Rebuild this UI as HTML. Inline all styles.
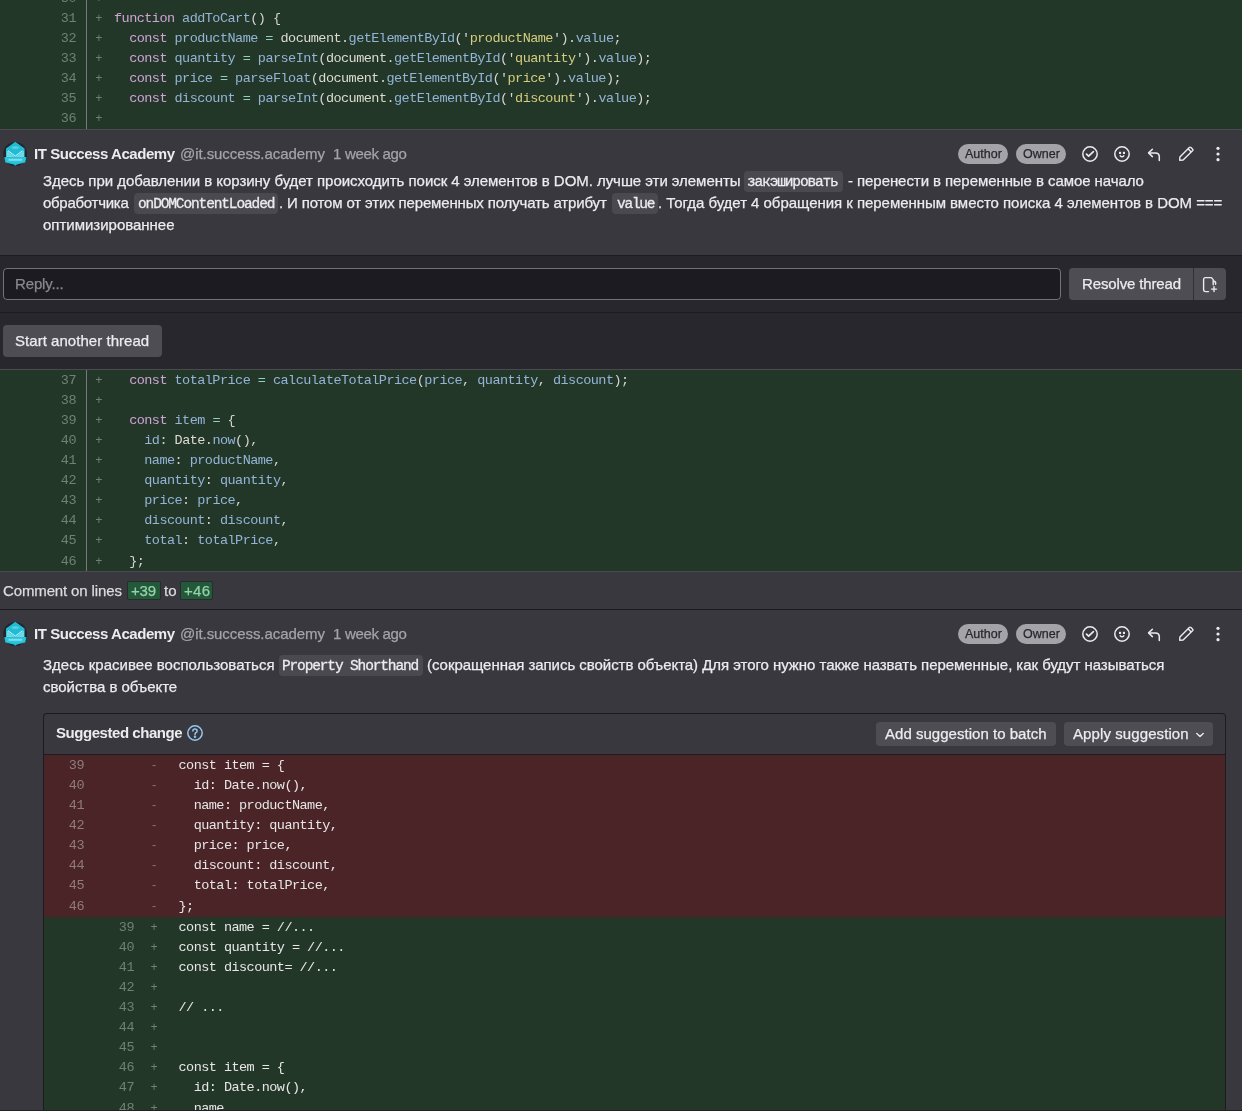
<!DOCTYPE html><html><head><meta charset="utf-8"><style>
html,body{margin:0;padding:0;}
body{width:1242px;height:1111px;position:relative;overflow:hidden;background:#39383e;font-family:'Liberation Sans', sans-serif;}
body>div,body>svg{position:absolute;}
.cr{will-change:transform;left:0;width:1242px;font-family:'Liberation Mono', monospace;font-size:13.5px;white-space:pre;}
.cr span.ln,.cr span.sg,.cr span.cd{position:absolute;top:0;letter-spacing:-0.536px;}
.cr span.sg{font-size:12px;letter-spacing:0;}
.t{white-space:pre;line-height:1;will-change:transform;}
</style></head><body>
<div style="left:0px;top:0px;width:1242px;height:129px;background:#233729;"></div>
<div style="left:86px;top:0px;width:1px;height:129px;background:#77797a;"></div>
<div style="left:0px;top:129px;width:1242px;height:1px;background:#4b4a50;"></div>
<div class="cr" style="top:-11.28px;height:20.1px;line-height:20.1px"><span class="ln" style="right:1166px;color:#708074">30</span><span class="sg" style="left:95.2px;color:#708074">+</span><span class="cd" style="left:114px"></span></div>
<div class="cr" style="top:8.80px;height:20.1px;line-height:20.1px"><span class="ln" style="right:1166px;color:#708074">31</span><span class="sg" style="left:95.2px;color:#708074">+</span><span class="cd" style="left:114px"><span style="color:#cfa3d6">function</span><span style="color:#d4d4d4"> </span><span style="color:#93b4d6">addToCart</span><span style="color:#d4d4d4">(</span><span style="color:#d4d4d4">)</span><span style="color:#d4d4d4"> </span><span style="color:#d4d4d4">{</span></span></div>
<div class="cr" style="top:28.88px;height:20.1px;line-height:20.1px"><span class="ln" style="right:1166px;color:#708074">32</span><span class="sg" style="left:95.2px;color:#708074">+</span><span class="cd" style="left:114px"><span style="color:#d4d4d4">  </span><span style="color:#cfa3d6">const</span><span style="color:#d4d4d4"> </span><span style="color:#93b4d6">productName</span><span style="color:#d4d4d4"> </span><span style="color:#97cdbf">=</span><span style="color:#d4d4d4"> </span><span style="color:#dcdccf">document</span><span style="color:#d4d4d4">.</span><span style="color:#93b4d6">getElementById</span><span style="color:#d4d4d4">(</span><span style="color:#d4d4d4">&#x27;</span><span style="color:#d3cc7c">productName</span><span style="color:#d4d4d4">&#x27;</span><span style="color:#d4d4d4">)</span><span style="color:#d4d4d4">.</span><span style="color:#93b4d6">value</span><span style="color:#d4d4d4">;</span></span></div>
<div class="cr" style="top:48.96px;height:20.1px;line-height:20.1px"><span class="ln" style="right:1166px;color:#708074">33</span><span class="sg" style="left:95.2px;color:#708074">+</span><span class="cd" style="left:114px"><span style="color:#d4d4d4">  </span><span style="color:#cfa3d6">const</span><span style="color:#d4d4d4"> </span><span style="color:#93b4d6">quantity</span><span style="color:#d4d4d4"> </span><span style="color:#97cdbf">=</span><span style="color:#d4d4d4"> </span><span style="color:#93b4d6">parseInt</span><span style="color:#d4d4d4">(</span><span style="color:#dcdccf">document</span><span style="color:#d4d4d4">.</span><span style="color:#93b4d6">getElementById</span><span style="color:#d4d4d4">(</span><span style="color:#d4d4d4">&#x27;</span><span style="color:#d3cc7c">quantity</span><span style="color:#d4d4d4">&#x27;</span><span style="color:#d4d4d4">)</span><span style="color:#d4d4d4">.</span><span style="color:#93b4d6">value</span><span style="color:#d4d4d4">)</span><span style="color:#d4d4d4">;</span></span></div>
<div class="cr" style="top:69.04px;height:20.1px;line-height:20.1px"><span class="ln" style="right:1166px;color:#708074">34</span><span class="sg" style="left:95.2px;color:#708074">+</span><span class="cd" style="left:114px"><span style="color:#d4d4d4">  </span><span style="color:#cfa3d6">const</span><span style="color:#d4d4d4"> </span><span style="color:#93b4d6">price</span><span style="color:#d4d4d4"> </span><span style="color:#97cdbf">=</span><span style="color:#d4d4d4"> </span><span style="color:#93b4d6">parseFloat</span><span style="color:#d4d4d4">(</span><span style="color:#dcdccf">document</span><span style="color:#d4d4d4">.</span><span style="color:#93b4d6">getElementById</span><span style="color:#d4d4d4">(</span><span style="color:#d4d4d4">&#x27;</span><span style="color:#d3cc7c">price</span><span style="color:#d4d4d4">&#x27;</span><span style="color:#d4d4d4">)</span><span style="color:#d4d4d4">.</span><span style="color:#93b4d6">value</span><span style="color:#d4d4d4">)</span><span style="color:#d4d4d4">;</span></span></div>
<div class="cr" style="top:89.12px;height:20.1px;line-height:20.1px"><span class="ln" style="right:1166px;color:#708074">35</span><span class="sg" style="left:95.2px;color:#708074">+</span><span class="cd" style="left:114px"><span style="color:#d4d4d4">  </span><span style="color:#cfa3d6">const</span><span style="color:#d4d4d4"> </span><span style="color:#93b4d6">discount</span><span style="color:#d4d4d4"> </span><span style="color:#97cdbf">=</span><span style="color:#d4d4d4"> </span><span style="color:#93b4d6">parseInt</span><span style="color:#d4d4d4">(</span><span style="color:#dcdccf">document</span><span style="color:#d4d4d4">.</span><span style="color:#93b4d6">getElementById</span><span style="color:#d4d4d4">(</span><span style="color:#d4d4d4">&#x27;</span><span style="color:#d3cc7c">discount</span><span style="color:#d4d4d4">&#x27;</span><span style="color:#d4d4d4">)</span><span style="color:#d4d4d4">.</span><span style="color:#93b4d6">value</span><span style="color:#d4d4d4">)</span><span style="color:#d4d4d4">;</span></span></div>
<div class="cr" style="top:109.20px;height:20.1px;line-height:20.1px"><span class="ln" style="right:1166px;color:#708074">36</span><span class="sg" style="left:95.2px;color:#708074">+</span><span class="cd" style="left:114px"></span></div>
<div style="left:0px;top:130px;width:1242px;height:125px;background:#39383e;"></div>
<div style="left:0px;top:255px;width:1242px;height:1px;background:#1c1b20;"></div>
<div style="left:0px;top:256px;width:1242px;height:56px;background:#28272d;"></div>
<div style="left:0px;top:312px;width:1242px;height:1px;background:#1c1b20;"></div>
<div style="left:0px;top:313px;width:1242px;height:56px;background:#28272d;"></div>
<div style="left:0px;top:369px;width:1242px;height:1px;background:#4b4a50;"></div>
<div style="left:0px;top:370px;width:1242px;height:201px;background:#233729;"></div>
<div style="left:86px;top:370px;width:1px;height:201px;background:#77797a;"></div>
<div class="cr" style="top:370.60px;height:20.1px;line-height:20.1px"><span class="ln" style="right:1166px;color:#708074">37</span><span class="sg" style="left:95.2px;color:#708074">+</span><span class="cd" style="left:114px"><span style="color:#d4d4d4">  </span><span style="color:#cfa3d6">const</span><span style="color:#d4d4d4"> </span><span style="color:#93b4d6">totalPrice</span><span style="color:#d4d4d4"> </span><span style="color:#97cdbf">=</span><span style="color:#d4d4d4"> </span><span style="color:#93b4d6">calculateTotalPrice</span><span style="color:#d4d4d4">(</span><span style="color:#93b4d6">price</span><span style="color:#d4d4d4">,</span><span style="color:#d4d4d4"> </span><span style="color:#93b4d6">quantity</span><span style="color:#d4d4d4">,</span><span style="color:#d4d4d4"> </span><span style="color:#93b4d6">discount</span><span style="color:#d4d4d4">)</span><span style="color:#d4d4d4">;</span></span></div>
<div class="cr" style="top:390.70px;height:20.1px;line-height:20.1px"><span class="ln" style="right:1166px;color:#708074">38</span><span class="sg" style="left:95.2px;color:#708074">+</span><span class="cd" style="left:114px"></span></div>
<div class="cr" style="top:410.80px;height:20.1px;line-height:20.1px"><span class="ln" style="right:1166px;color:#708074">39</span><span class="sg" style="left:95.2px;color:#708074">+</span><span class="cd" style="left:114px"><span style="color:#d4d4d4">  </span><span style="color:#cfa3d6">const</span><span style="color:#d4d4d4"> </span><span style="color:#93b4d6">item</span><span style="color:#d4d4d4"> </span><span style="color:#97cdbf">=</span><span style="color:#d4d4d4"> </span><span style="color:#d4d4d4">{</span></span></div>
<div class="cr" style="top:430.90px;height:20.1px;line-height:20.1px"><span class="ln" style="right:1166px;color:#708074">40</span><span class="sg" style="left:95.2px;color:#708074">+</span><span class="cd" style="left:114px"><span style="color:#d4d4d4">    </span><span style="color:#93b4d6">id</span><span style="color:#d4d4d4">:</span><span style="color:#d4d4d4"> </span><span style="color:#dcdccf">Date</span><span style="color:#d4d4d4">.</span><span style="color:#93b4d6">now</span><span style="color:#d4d4d4">(</span><span style="color:#d4d4d4">)</span><span style="color:#d4d4d4">,</span></span></div>
<div class="cr" style="top:451.00px;height:20.1px;line-height:20.1px"><span class="ln" style="right:1166px;color:#708074">41</span><span class="sg" style="left:95.2px;color:#708074">+</span><span class="cd" style="left:114px"><span style="color:#d4d4d4">    </span><span style="color:#93b4d6">name</span><span style="color:#d4d4d4">:</span><span style="color:#d4d4d4"> </span><span style="color:#93b4d6">productName</span><span style="color:#d4d4d4">,</span></span></div>
<div class="cr" style="top:471.10px;height:20.1px;line-height:20.1px"><span class="ln" style="right:1166px;color:#708074">42</span><span class="sg" style="left:95.2px;color:#708074">+</span><span class="cd" style="left:114px"><span style="color:#d4d4d4">    </span><span style="color:#93b4d6">quantity</span><span style="color:#d4d4d4">:</span><span style="color:#d4d4d4"> </span><span style="color:#93b4d6">quantity</span><span style="color:#d4d4d4">,</span></span></div>
<div class="cr" style="top:491.20px;height:20.1px;line-height:20.1px"><span class="ln" style="right:1166px;color:#708074">43</span><span class="sg" style="left:95.2px;color:#708074">+</span><span class="cd" style="left:114px"><span style="color:#d4d4d4">    </span><span style="color:#93b4d6">price</span><span style="color:#d4d4d4">:</span><span style="color:#d4d4d4"> </span><span style="color:#93b4d6">price</span><span style="color:#d4d4d4">,</span></span></div>
<div class="cr" style="top:511.30px;height:20.1px;line-height:20.1px"><span class="ln" style="right:1166px;color:#708074">44</span><span class="sg" style="left:95.2px;color:#708074">+</span><span class="cd" style="left:114px"><span style="color:#d4d4d4">    </span><span style="color:#93b4d6">discount</span><span style="color:#d4d4d4">:</span><span style="color:#d4d4d4"> </span><span style="color:#93b4d6">discount</span><span style="color:#d4d4d4">,</span></span></div>
<div class="cr" style="top:531.40px;height:20.1px;line-height:20.1px"><span class="ln" style="right:1166px;color:#708074">45</span><span class="sg" style="left:95.2px;color:#708074">+</span><span class="cd" style="left:114px"><span style="color:#d4d4d4">    </span><span style="color:#93b4d6">total</span><span style="color:#d4d4d4">:</span><span style="color:#d4d4d4"> </span><span style="color:#93b4d6">totalPrice</span><span style="color:#d4d4d4">,</span></span></div>
<div class="cr" style="top:551.50px;height:20.1px;line-height:20.1px"><span class="ln" style="right:1166px;color:#708074">46</span><span class="sg" style="left:95.2px;color:#708074">+</span><span class="cd" style="left:114px"><span style="color:#d4d4d4">  </span><span style="color:#d4d4d4">}</span><span style="color:#d4d4d4">;</span></span></div>
<div style="left:0px;top:571px;width:1242px;height:1px;background:#4b4a50;"></div>
<div style="left:0px;top:572px;width:1242px;height:37px;background:#39383e;"></div>
<div style="left:0px;top:609px;width:1242px;height:1px;background:#1c1b20;"></div>
<svg style="left:3px;top:142px" width="24" height="24" viewBox="0 0 24 24">
<circle cx="12.2" cy="12" r="12" fill="#25242a"/>
<path d="M12.3 -0.2 L21.6 6.6 L21.6 15 L23.4 15.3 L22.2 20.4 L14 22.6 L12.3 23.8 L10.6 22.6 L2.4 20.4 L1.2 15.3 L3 15 L3 6.6 Z" fill="#1fbcd5"/>
<path d="M3.6 8.5 L12.3 15 L21 8.5 L21 15 L3.6 15 Z" fill="#8fe2ee" opacity="0.7"/>
<path d="M5 8.7 L12.3 14 L19.6 8.7" fill="none" stroke="#e6fbff" stroke-width="1" opacity="0.85"/>
<path d="M8 5.5 Q12.3 3 16.6 5.5 Q12.3 8.5 8 5.5 Z" fill="#7fdcea" opacity="0.6"/>
<path d="M2 15.6 L22.6 15.6 L21.6 19.8 L12.3 21.6 L3 19.8 Z" fill="#2cc6dc"/>
<rect x="5.5" y="16.8" width="13.6" height="2" fill="#c5f3f9" opacity="0.55"/>
</svg>
<svg style="left:3px;top:622px" width="24" height="24" viewBox="0 0 24 24">
<circle cx="12.2" cy="12" r="12" fill="#25242a"/>
<path d="M12.3 -0.2 L21.6 6.6 L21.6 15 L23.4 15.3 L22.2 20.4 L14 22.6 L12.3 23.8 L10.6 22.6 L2.4 20.4 L1.2 15.3 L3 15 L3 6.6 Z" fill="#1fbcd5"/>
<path d="M3.6 8.5 L12.3 15 L21 8.5 L21 15 L3.6 15 Z" fill="#8fe2ee" opacity="0.7"/>
<path d="M5 8.7 L12.3 14 L19.6 8.7" fill="none" stroke="#e6fbff" stroke-width="1" opacity="0.85"/>
<path d="M8 5.5 Q12.3 3 16.6 5.5 Q12.3 8.5 8 5.5 Z" fill="#7fdcea" opacity="0.6"/>
<path d="M2 15.6 L22.6 15.6 L21.6 19.8 L12.3 21.6 L3 19.8 Z" fill="#2cc6dc"/>
<rect x="5.5" y="16.8" width="13.6" height="2" fill="#c5f3f9" opacity="0.55"/>
</svg>
<div class="t" style="left:34.00px;top:146px;font-family:'Liberation Sans', sans-serif;font-size:15px;font-weight:bold;color:#ececef;letter-spacing:-0.447px;-webkit-text-stroke:0px #ececef">IT Success Academy</div>
<div class="t" style="left:180.10px;top:146px;font-family:'Liberation Sans', sans-serif;font-size:15px;font-weight:normal;color:#a4a3a8;letter-spacing:-0.067px;-webkit-text-stroke:0.25px #a4a3a8">@it.success.academy</div>
<div class="t" style="left:333.00px;top:146px;font-family:'Liberation Sans', sans-serif;font-size:15px;font-weight:normal;color:#a4a3a8;letter-spacing:-0.311px;-webkit-text-stroke:0.25px #a4a3a8">1 week ago</div>
<div style="left:958px;top:144px;width:50px;height:20px;background:#a4a3a8;border-radius:10px;"></div>
<div style="left:1016px;top:144px;width:50px;height:20px;background:#a4a3a8;border-radius:10px;"></div>
<svg style="left:1082px;top:146px" width="16" height="16" viewBox="0 0 16 16" fill="none" stroke="#ececef" stroke-width="1.5" stroke-linecap="round" stroke-linejoin="round"><circle cx="8" cy="8" r="7.2"/><path d="M4.5 8.2 L6.6 10.2 L11.4 5.6" stroke-width="1.7"/></svg>
<svg style="left:1114px;top:146px" width="16" height="16" viewBox="0 0 16 16" fill="none" stroke="#ececef" stroke-width="1.5" stroke-linecap="round"><circle cx="8" cy="8" r="7.2"/><path d="M6.2 9.7 Q8 11.9 9.8 9.7" stroke-width="1.4"/><rect x="5" y="5.8" width="2.1" height="2.2" fill="#ececef" stroke="none"/><rect x="8.9" y="5.8" width="2.1" height="2.2" fill="#ececef" stroke="none"/></svg>
<svg style="left:1146px;top:146px" width="16" height="16" viewBox="0 0 16 16" fill="none" stroke="#ececef" stroke-width="1.5" stroke-linecap="round" stroke-linejoin="round"><path d="M6.4 3.2 L2.6 6.9 L6.4 10.6"/><path d="M2.8 6.9 H9.4 Q13.3 6.9 13.3 10.8 V14.6"/></svg>
<svg style="left:1178px;top:146px" width="16" height="16" viewBox="0 0 16 16" fill="none" stroke="#ececef" stroke-width="1.4" stroke-linejoin="round"><path d="M1.7 14.3 L1.9 10.9 L11.3 1.5 Q12.1 0.7 12.9 1.5 L14.5 3.1 Q15.3 3.9 14.5 4.7 L5.1 14.1 Z"/><path d="M10.1 2.8 L13.2 5.9"/></svg>
<svg style="left:1210px;top:146px" width="16" height="16" viewBox="0 0 16 16" fill="#ececef"><circle cx="8" cy="2.3" r="1.6"/><circle cx="8" cy="8" r="1.6"/><circle cx="8" cy="13.7" r="1.6"/></svg>
<div class="t" style="left:964.70px;top:148px;font-family:'Liberation Sans', sans-serif;font-size:12.5px;font-weight:normal;color:#28272d;letter-spacing:0.000px;-webkit-text-stroke:0.25px #28272d">Author</div>
<div class="t" style="left:1022.80px;top:148px;font-family:'Liberation Sans', sans-serif;font-size:12.5px;font-weight:normal;color:#28272d;letter-spacing:0.000px;-webkit-text-stroke:0.25px #28272d">Owner</div>
<div style="left:744px;top:171px;width:99px;height:21px;background:#4a494f;border-radius:4px;"></div>
<div style="left:134px;top:193px;width:144px;height:21px;background:#4a494f;border-radius:4px;"></div>
<div style="left:612px;top:193px;width:46px;height:21px;background:#4a494f;border-radius:4px;"></div>
<div class="t" style="left:43.20px;top:173px;font-family:'Liberation Sans', sans-serif;font-size:15px;font-weight:normal;color:#ececef;letter-spacing:-0.046px;-webkit-text-stroke:0.25px #ececef">Здесь при добавлении в корзину будет происходить поиск 4 элементов в DOM. лучше эти элементы</div>
<div class="t" style="left:747.40px;top:175px;font-family:'Liberation Mono', monospace;font-size:14.5px;font-weight:normal;color:#ececef;letter-spacing:-1.145px;-webkit-text-stroke:0.3px #ececef">закэшировать</div>
<div class="t" style="left:847.50px;top:173px;font-family:'Liberation Sans', sans-serif;font-size:15px;font-weight:normal;color:#ececef;letter-spacing:-0.068px;-webkit-text-stroke:0.25px #ececef">- перенести в переменные в самое начало</div>
<div class="t" style="left:43.00px;top:195px;font-family:'Liberation Sans', sans-serif;font-size:15px;font-weight:normal;color:#ececef;letter-spacing:-0.280px;-webkit-text-stroke:0.25px #ececef">обработчика</div>
<div class="t" style="left:137.60px;top:197px;font-family:'Liberation Mono', monospace;font-size:14.5px;font-weight:normal;color:#ececef;letter-spacing:-1.129px;-webkit-text-stroke:0.3px #ececef">onDOMContentLoaded</div>
<div class="t" style="left:278.50px;top:195px;font-family:'Liberation Sans', sans-serif;font-size:15px;font-weight:normal;color:#ececef;letter-spacing:-0.150px;-webkit-text-stroke:0.25px #ececef">. И потом от этих переменных получать атрибут</div>
<div class="t" style="left:616.50px;top:197px;font-family:'Liberation Mono', monospace;font-size:14.5px;font-weight:normal;color:#ececef;letter-spacing:-1.250px;-webkit-text-stroke:0.3px #ececef">value</div>
<div class="t" style="left:658.00px;top:195px;font-family:'Liberation Sans', sans-serif;font-size:15px;font-weight:normal;color:#ececef;letter-spacing:-0.038px;-webkit-text-stroke:0.25px #ececef">. Тогда будет 4 обращения к переменным вместо поиска 4 элементов в DOM ===</div>
<div class="t" style="left:43.00px;top:217px;font-family:'Liberation Sans', sans-serif;font-size:15px;font-weight:normal;color:#ececef;letter-spacing:-0.013px;-webkit-text-stroke:0.25px #ececef">оптимизированнее</div>
<div style="left:3px;top:268px;width:1058px;height:32px;background:#1c1b21;box-sizing:border-box;border:1px solid #737278;border-radius:4px;"></div>
<div class="t" style="left:14.50px;top:276px;font-family:'Liberation Sans', sans-serif;font-size:15px;font-weight:normal;color:#89888d;letter-spacing:-0.143px;-webkit-text-stroke:0.25px #89888d">Reply...</div>
<div style="left:1069px;top:268px;width:157px;height:32px;background:#4e4d53;border-radius:4px;"></div>
<div style="left:1193px;top:268px;width:1px;height:32px;background:#323137;"></div>
<div class="t" style="left:1081.70px;top:276px;font-family:'Liberation Sans', sans-serif;font-size:15px;font-weight:normal;color:#ececef;letter-spacing:-0.138px;-webkit-text-stroke:0.25px #ececef">Resolve thread</div>
<svg style="left:1201px;top:276px" width="18" height="18" viewBox="0 0 18 18" fill="none" stroke="#ececef" stroke-width="1.4" stroke-linecap="round" stroke-linejoin="round"><path d="M7.5 15.6 H4.6 Q2.6 15.6 2.6 13.6 V3.6 Q2.6 1.6 4.6 1.6 H10.4 L12.2 3.6 V8.8"/><path d="M12.6 5 Q15.2 5.6 14.6 8.2"/><path d="M13 10.6 V15.6 M10.5 13.1 H15.5"/></svg>
<div style="left:3px;top:325px;width:159px;height:32px;background:#4e4d53;border-radius:4px;"></div>
<div class="t" style="left:15.20px;top:333px;font-family:'Liberation Sans', sans-serif;font-size:15px;font-weight:normal;color:#ececef;letter-spacing:0.042px;-webkit-text-stroke:0.25px #ececef">Start another thread</div>
<div class="t" style="left:3.20px;top:583px;font-family:'Liberation Sans', sans-serif;font-size:15px;font-weight:normal;color:#dcdcde;letter-spacing:-0.133px;-webkit-text-stroke:0.25px #dcdcde">Comment on lines</div>
<div style="left:127.5px;top:581.8px;width:32px;height:17.5px;background:#25573a;border-radius:1px;box-shadow:0 0 0 1px #23302a;"></div>
<div style="left:180.8px;top:581.8px;width:31.5px;height:17.5px;background:#25573a;border-radius:1px;box-shadow:0 0 0 1px #23302a;"></div>
<div class="t" style="left:130.50px;top:583px;font-family:'Liberation Sans', sans-serif;font-size:15px;font-weight:normal;color:#91d4a8;letter-spacing:-0.200px;-webkit-text-stroke:0.25px #91d4a8">+39</div>
<div class="t" style="left:163.50px;top:583px;font-family:'Liberation Sans', sans-serif;font-size:15px;font-weight:normal;color:#dcdcde;letter-spacing:0.000px;-webkit-text-stroke:0.25px #dcdcde">to</div>
<div class="t" style="left:184.00px;top:583px;font-family:'Liberation Sans', sans-serif;font-size:15px;font-weight:normal;color:#91d4a8;letter-spacing:0.300px;-webkit-text-stroke:0.25px #91d4a8">+46</div>
<div class="t" style="left:34.00px;top:626px;font-family:'Liberation Sans', sans-serif;font-size:15px;font-weight:bold;color:#ececef;letter-spacing:-0.447px;-webkit-text-stroke:0px #ececef">IT Success Academy</div>
<div class="t" style="left:180.10px;top:626px;font-family:'Liberation Sans', sans-serif;font-size:15px;font-weight:normal;color:#a4a3a8;letter-spacing:-0.067px;-webkit-text-stroke:0.25px #a4a3a8">@it.success.academy</div>
<div class="t" style="left:333.00px;top:626px;font-family:'Liberation Sans', sans-serif;font-size:15px;font-weight:normal;color:#a4a3a8;letter-spacing:-0.311px;-webkit-text-stroke:0.25px #a4a3a8">1 week ago</div>
<div style="left:958px;top:624px;width:50px;height:20px;background:#a4a3a8;border-radius:10px;"></div>
<div style="left:1016px;top:624px;width:50px;height:20px;background:#a4a3a8;border-radius:10px;"></div>
<svg style="left:1082px;top:626px" width="16" height="16" viewBox="0 0 16 16" fill="none" stroke="#ececef" stroke-width="1.5" stroke-linecap="round" stroke-linejoin="round"><circle cx="8" cy="8" r="7.2"/><path d="M4.5 8.2 L6.6 10.2 L11.4 5.6" stroke-width="1.7"/></svg>
<svg style="left:1114px;top:626px" width="16" height="16" viewBox="0 0 16 16" fill="none" stroke="#ececef" stroke-width="1.5" stroke-linecap="round"><circle cx="8" cy="8" r="7.2"/><path d="M6.2 9.7 Q8 11.9 9.8 9.7" stroke-width="1.4"/><rect x="5" y="5.8" width="2.1" height="2.2" fill="#ececef" stroke="none"/><rect x="8.9" y="5.8" width="2.1" height="2.2" fill="#ececef" stroke="none"/></svg>
<svg style="left:1146px;top:626px" width="16" height="16" viewBox="0 0 16 16" fill="none" stroke="#ececef" stroke-width="1.5" stroke-linecap="round" stroke-linejoin="round"><path d="M6.4 3.2 L2.6 6.9 L6.4 10.6"/><path d="M2.8 6.9 H9.4 Q13.3 6.9 13.3 10.8 V14.6"/></svg>
<svg style="left:1178px;top:626px" width="16" height="16" viewBox="0 0 16 16" fill="none" stroke="#ececef" stroke-width="1.4" stroke-linejoin="round"><path d="M1.7 14.3 L1.9 10.9 L11.3 1.5 Q12.1 0.7 12.9 1.5 L14.5 3.1 Q15.3 3.9 14.5 4.7 L5.1 14.1 Z"/><path d="M10.1 2.8 L13.2 5.9"/></svg>
<svg style="left:1210px;top:626px" width="16" height="16" viewBox="0 0 16 16" fill="#ececef"><circle cx="8" cy="2.3" r="1.6"/><circle cx="8" cy="8" r="1.6"/><circle cx="8" cy="13.7" r="1.6"/></svg>
<div class="t" style="left:964.70px;top:628px;font-family:'Liberation Sans', sans-serif;font-size:12.5px;font-weight:normal;color:#28272d;letter-spacing:0.000px;-webkit-text-stroke:0.25px #28272d">Author</div>
<div class="t" style="left:1022.80px;top:628px;font-family:'Liberation Sans', sans-serif;font-size:12.5px;font-weight:normal;color:#28272d;letter-spacing:0.000px;-webkit-text-stroke:0.25px #28272d">Owner</div>
<div style="left:279px;top:655px;width:144px;height:21px;background:#4a494f;border-radius:4px;"></div>
<div class="t" style="left:43.00px;top:657px;font-family:'Liberation Sans', sans-serif;font-size:15px;font-weight:normal;color:#ececef;letter-spacing:0.021px;-webkit-text-stroke:0.25px #ececef">Здесь красивее воспользоваться</div>
<div class="t" style="left:282.30px;top:659px;font-family:'Liberation Mono', monospace;font-size:14.5px;font-weight:normal;color:#ececef;letter-spacing:-1.141px;-webkit-text-stroke:0.3px #ececef">Property Shorthand</div>
<div class="t" style="left:427.30px;top:657px;font-family:'Liberation Sans', sans-serif;font-size:15px;font-weight:normal;color:#ececef;letter-spacing:-0.043px;-webkit-text-stroke:0.25px #ececef">(сокращенная запись свойств объекта) Для этого нужно также назвать переменные, как будут называться</div>
<div class="t" style="left:43.00px;top:679px;font-family:'Liberation Sans', sans-serif;font-size:15px;font-weight:normal;color:#ececef;letter-spacing:-0.035px;-webkit-text-stroke:0.25px #ececef">свойства в объекте</div>
<div style="left:43px;top:713px;width:1183px;height:420px;background:#1c1b20;border-radius:4px;"></div>
<div style="left:44px;top:714px;width:1181px;height:40px;background:#39383e;border-radius:3px 3px 0 0;"></div>
<div class="t" style="left:56.10px;top:725px;font-family:'Liberation Sans', sans-serif;font-size:15px;font-weight:bold;color:#ececef;letter-spacing:-0.453px;-webkit-text-stroke:0px #ececef">Suggested change</div>
<svg style="left:187px;top:725px" width="16" height="16" viewBox="0 0 16 16" fill="none" stroke="#95c6f2" stroke-width="1.5" stroke-linecap="round"><circle cx="8" cy="8" r="7.2"/><path d="M5.9 6.1 Q5.9 4 8 4 Q10.1 4 10.1 5.9 Q10.1 7.1 8.9 7.7 Q8 8.2 8 9.4"/><circle cx="8" cy="11.8" r="0.5" fill="#95c6f2"/></svg>
<div style="left:876px;top:722px;width:180px;height:24px;background:#4e4d53;border-radius:4px;"></div>
<div style="left:1064px;top:722px;width:149px;height:24px;background:#4e4d53;border-radius:4px;"></div>
<div class="t" style="left:885.20px;top:726px;font-family:'Liberation Sans', sans-serif;font-size:15px;font-weight:normal;color:#ececef;letter-spacing:0.027px;-webkit-text-stroke:0.25px #ececef">Add suggestion to batch</div>
<div class="t" style="left:1073.00px;top:726px;font-family:'Liberation Sans', sans-serif;font-size:15px;font-weight:normal;color:#ececef;letter-spacing:0.093px;-webkit-text-stroke:0.25px #ececef">Apply suggestion</div>
<svg style="left:1194px;top:729px" width="12" height="12" viewBox="0 0 12 12" fill="none" stroke="#ececef" stroke-width="1.4" stroke-linecap="round" stroke-linejoin="round"><path d="M2.8 4.6 L6 7.6 L9.2 4.6"/></svg>
<div style="left:44px;top:755px;width:1181px;height:162px;background:#4a2426;"></div>
<div style="left:44px;top:917px;width:1181px;height:200px;background:#233729;"></div>
<div class="cr" style="top:755.60px;height:20.1px;line-height:20.1px"><span class="ln" style="right:1158px;color:#927b7d">39</span><span class="sg" style="left:150.6px;color:#866e70">-</span><span class="cd" style="left:178.5px"><span style="color:#e6e6e6">const item = {</span></span></div>
<div class="cr" style="top:775.74px;height:20.1px;line-height:20.1px"><span class="ln" style="right:1158px;color:#927b7d">40</span><span class="sg" style="left:150.6px;color:#866e70">-</span><span class="cd" style="left:178.5px"><span style="color:#e6e6e6">  id: Date.now(),</span></span></div>
<div class="cr" style="top:795.88px;height:20.1px;line-height:20.1px"><span class="ln" style="right:1158px;color:#927b7d">41</span><span class="sg" style="left:150.6px;color:#866e70">-</span><span class="cd" style="left:178.5px"><span style="color:#e6e6e6">  name: productName,</span></span></div>
<div class="cr" style="top:816.02px;height:20.1px;line-height:20.1px"><span class="ln" style="right:1158px;color:#927b7d">42</span><span class="sg" style="left:150.6px;color:#866e70">-</span><span class="cd" style="left:178.5px"><span style="color:#e6e6e6">  quantity: quantity,</span></span></div>
<div class="cr" style="top:836.16px;height:20.1px;line-height:20.1px"><span class="ln" style="right:1158px;color:#927b7d">43</span><span class="sg" style="left:150.6px;color:#866e70">-</span><span class="cd" style="left:178.5px"><span style="color:#e6e6e6">  price: price,</span></span></div>
<div class="cr" style="top:856.30px;height:20.1px;line-height:20.1px"><span class="ln" style="right:1158px;color:#927b7d">44</span><span class="sg" style="left:150.6px;color:#866e70">-</span><span class="cd" style="left:178.5px"><span style="color:#e6e6e6">  discount: discount,</span></span></div>
<div class="cr" style="top:876.44px;height:20.1px;line-height:20.1px"><span class="ln" style="right:1158px;color:#927b7d">45</span><span class="sg" style="left:150.6px;color:#866e70">-</span><span class="cd" style="left:178.5px"><span style="color:#e6e6e6">  total: totalPrice,</span></span></div>
<div class="cr" style="top:896.58px;height:20.1px;line-height:20.1px"><span class="ln" style="right:1158px;color:#927b7d">46</span><span class="sg" style="left:150.6px;color:#866e70">-</span><span class="cd" style="left:178.5px"><span style="color:#e6e6e6">};</span></span></div>
<div class="cr" style="top:917.60px;height:20.1px;line-height:20.1px"><span class="ln" style="right:1108px;color:#708074">39</span><span class="sg" style="left:150.6px;color:#708074">+</span><span class="cd" style="left:178.5px"><span style="color:#e6e6e6">const name = //...</span></span></div>
<div class="cr" style="top:937.70px;height:20.1px;line-height:20.1px"><span class="ln" style="right:1108px;color:#708074">40</span><span class="sg" style="left:150.6px;color:#708074">+</span><span class="cd" style="left:178.5px"><span style="color:#e6e6e6">const quantity = //...</span></span></div>
<div class="cr" style="top:957.80px;height:20.1px;line-height:20.1px"><span class="ln" style="right:1108px;color:#708074">41</span><span class="sg" style="left:150.6px;color:#708074">+</span><span class="cd" style="left:178.5px"><span style="color:#e6e6e6">const discount= //...</span></span></div>
<div class="cr" style="top:977.90px;height:20.1px;line-height:20.1px"><span class="ln" style="right:1108px;color:#708074">42</span><span class="sg" style="left:150.6px;color:#708074">+</span><span class="cd" style="left:178.5px"><span style="color:#e6e6e6"></span></span></div>
<div class="cr" style="top:998.00px;height:20.1px;line-height:20.1px"><span class="ln" style="right:1108px;color:#708074">43</span><span class="sg" style="left:150.6px;color:#708074">+</span><span class="cd" style="left:178.5px"><span style="color:#e6e6e6">// ...</span></span></div>
<div class="cr" style="top:1018.10px;height:20.1px;line-height:20.1px"><span class="ln" style="right:1108px;color:#708074">44</span><span class="sg" style="left:150.6px;color:#708074">+</span><span class="cd" style="left:178.5px"><span style="color:#e6e6e6"></span></span></div>
<div class="cr" style="top:1038.20px;height:20.1px;line-height:20.1px"><span class="ln" style="right:1108px;color:#708074">45</span><span class="sg" style="left:150.6px;color:#708074">+</span><span class="cd" style="left:178.5px"><span style="color:#e6e6e6"></span></span></div>
<div class="cr" style="top:1058.30px;height:20.1px;line-height:20.1px"><span class="ln" style="right:1108px;color:#708074">46</span><span class="sg" style="left:150.6px;color:#708074">+</span><span class="cd" style="left:178.5px"><span style="color:#e6e6e6">const item = {</span></span></div>
<div class="cr" style="top:1078.40px;height:20.1px;line-height:20.1px"><span class="ln" style="right:1108px;color:#708074">47</span><span class="sg" style="left:150.6px;color:#708074">+</span><span class="cd" style="left:178.5px"><span style="color:#e6e6e6">  id: Date.now(),</span></span></div>
<div class="cr" style="top:1098.50px;height:20.1px;line-height:20.1px"><span class="ln" style="right:1108px;color:#708074">48</span><span class="sg" style="left:150.6px;color:#708074">+</span><span class="cd" style="left:178.5px"><span style="color:#e6e6e6">  name</span></span></div>
<div style="left:0px;top:1110px;width:1242px;height:1px;background:#212121;"></div>
</body></html>
